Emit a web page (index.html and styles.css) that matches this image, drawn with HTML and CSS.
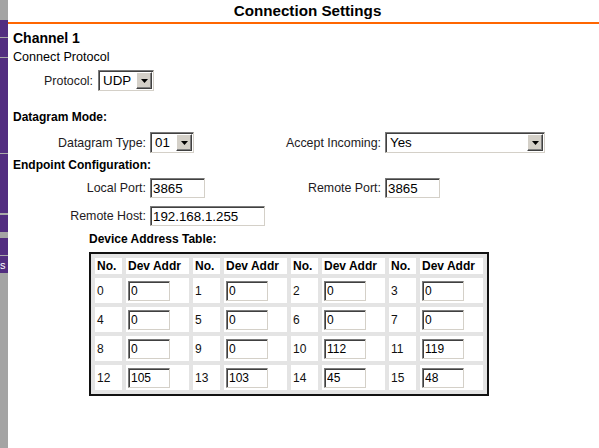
FILE: index.html
```html
<!DOCTYPE html>
<html lang="en">
<head>
<meta charset="utf-8">
<title>Connection Settings</title>
<link rel="stylesheet" href="styles.css">
</head>
<body>
<div class="page">
  <nav class="sidebar">
    <div class="nav-gap g20"></div>
    <div class="nav-item h18 sep"></div>
    <div class="nav-item h20 sep"></div>
    <div class="nav-item h96 sep"></div>
    <div class="nav-item h61 sep2"></div>
    <div class="nav-item h17"></div>
    <div class="nav-gap g6"></div>
    <div class="nav-item h18 sep"></div>
    <div class="nav-item h17 nav-link"><span>s</span></div>
  </nav>
  <main class="main">
    <h1 class="title">Connection Settings</h1>
    <div class="content">
      <h2 class="channel">Channel 1</h2>
      <div class="subhead">Connect Protocol</div>
      <div class="proto-row">
        <label class="lbl proto-lbl">Protocol:</label>
        <div class="sel w56">
          <select><option>UDP</option></select>
          <span class="arrow"><svg width="7" height="4" viewBox="0 0 7 4"><path d="M0 0H7L3.5 4Z" fill="#000"/></svg></span>
        </div>
      </div>

      <h3 class="section dgram-head">Datagram Mode:</h3>
      <div class="form-grid dgram-grid">
        <label class="lbl">Datagram Type:</label>
        <div class="sel w44">
          <select><option>01</option></select>
          <span class="arrow"><svg width="7" height="4" viewBox="0 0 7 4"><path d="M0 0H7L3.5 4Z" fill="#000"/></svg></span>
        </div>
        <label class="lbl">Accept Incoming:</label>
        <div class="sel w160">
          <select><option>Yes</option></select>
          <span class="arrow"><svg width="7" height="4" viewBox="0 0 7 4"><path d="M0 0H7L3.5 4Z" fill="#000"/></svg></span>
        </div>
      </div>

      <h3 class="section ep-head">Endpoint Configuration:</h3>
      <div class="form-grid ep-grid">
        <label class="lbl">Local Port:</label>
        <input class="txt w55" type="text" value="3865">
        <label class="lbl">Remote Port:</label>
        <input class="txt w55" type="text" value="3865">
        <label class="lbl">Remote Host:</label>
        <input class="txt w115 span2" type="text" value="192.168.1.255">
      </div>

      <h3 class="section table-head">Device Address Table:</h3>
      <table class="addr-table">
        <thead>
          <tr>
            <th class="c-no">No.</th><th class="c-addr">Dev Addr</th>
            <th class="c-no">No.</th><th class="c-addr">Dev Addr</th>
            <th class="c-no">No.</th><th class="c-addr">Dev Addr</th>
            <th class="c-no">No.</th><th class="c-addr">Dev Addr</th>
          </tr>
        </thead>
        <tbody>
          <tr>
            <td>0</td><td><input class="cell-in" type="text" value="0"></td>
            <td>1</td><td><input class="cell-in" type="text" value="0"></td>
            <td>2</td><td><input class="cell-in" type="text" value="0"></td>
            <td>3</td><td><input class="cell-in" type="text" value="0"></td>
          </tr>
          <tr>
            <td>4</td><td><input class="cell-in" type="text" value="0"></td>
            <td>5</td><td><input class="cell-in" type="text" value="0"></td>
            <td>6</td><td><input class="cell-in" type="text" value="0"></td>
            <td>7</td><td><input class="cell-in" type="text" value="0"></td>
          </tr>
          <tr>
            <td>8</td><td><input class="cell-in" type="text" value="0"></td>
            <td>9</td><td><input class="cell-in" type="text" value="0"></td>
            <td>10</td><td><input class="cell-in" type="text" value="112"></td>
            <td>11</td><td><input class="cell-in" type="text" value="119"></td>
          </tr>
          <tr>
            <td>12</td><td><input class="cell-in" type="text" value="105"></td>
            <td>13</td><td><input class="cell-in" type="text" value="103"></td>
            <td>14</td><td><input class="cell-in" type="text" value="45"></td>
            <td>15</td><td><input class="cell-in" type="text" value="48"></td>
          </tr>
        </tbody>
      </table>
    </div>
  </main>
</div>
</body>
</html>
```

FILE: styles.css
```css
* { box-sizing: border-box; }
html, body { margin: 0; padding: 0; background: #fff; }
body {
  font-family: "Liberation Sans", Arial, sans-serif;
  color: #000;
}
.page { display: flex; min-height: 100vh; }

/* sidebar */
.sidebar {
  width: 8px;
  flex: none;
  display: flex;
  flex-direction: column;
  background: #a4a4a4;
}
.nav-item { background: #522d80; }
.sep { border-bottom: 1px solid #a9a9a9; }
.sep2 { border-bottom: 2px solid #a9a9a9; }
.g20 { height: 20px; }
.g6 { height: 6px; }
.h17 { height: 17px; }
.h18 { height: 18px; }
.h20 { height: 20px; }
.h61 { height: 61px; }
.h96 { height: 96px; }
.nav-link {
  display: flex;
  align-items: center;
  padding-left: 0;
  color: #fff;
  font-size: 11px;
  line-height: 12px;
}

/* main */
.main { flex: 1; min-width: 0; }
.title {
  margin: 0;
  height: 24px;
  line-height: 22px;
  padding-left: 8px;
  text-align: center;
  font-size: 15.2px;
  font-weight: bold;
  border-bottom: 2px solid #ff6600;
}
.content { padding-left: 5px; }
.channel {
  margin: 6px 0 0;
  font-size: 14px;
  line-height: 16px;
  font-weight: bold;
}
.subhead {
  margin-top: 4px;
  font-size: 12.6px;
  line-height: 15px;
}
.lbl {
  font-size: 12.4px;
  color: #221a22;
  text-align: right;
  white-space: nowrap;
}
.proto-row {
  margin-top: 5px;
  display: flex;
  align-items: center;
  gap: 5px;
}
.proto-lbl { width: 80px; }

.section {
  margin: 0;
  font-size: 12px;
  line-height: 14px;
  font-weight: bold;
}
.dgram-head { margin-top: 19px; }
.ep-head { margin-top: 5px; }
.table-head { margin-top: 6px; padding-left: 76px; }

.form-grid {
  display: grid;
  grid-template-columns: 133px 60px 167px auto;
  column-gap: 4px;
  row-gap: 8px;
  align-items: center;
}
.form-grid .lbl { justify-self: end; }
.dgram-grid { margin-top: 8px; }
.ep-grid { margin-top: 6px; }
.span2 { grid-column: 2 / 4; }

/* select-like control */
.sel {
  display: inline-flex;
  height: 21px;
  background: #fff;
  border: 1px solid;
  border-color: #7b7b7b #d4d0c8 #d4d0c8 #7b7b7b;
  box-shadow: inset 1px 1px #404040;
  padding: 1px;
  justify-self: start;
}
.sel select {
  appearance: none;
  -webkit-appearance: none;
  border: 0;
  background: transparent;
  flex: 1;
  min-width: 0;
  padding: 0 0 0 3px;
  margin: 0;
  font-family: "Liberation Sans", Arial, sans-serif;
  font-size: 13.33px;
  color: #000;
  outline: none;
}
.arrow {
  flex: none;
  width: 16px;
  display: flex;
  align-items: center;
  justify-content: center;
  background: #d4d0c8;
  border: 1px solid;
  border-color: #ffffff #404040 #404040 #ffffff;
  box-shadow: inset -1px -1px #808080;
}
.w44 { width: 44px; }
.w56 { width: 56px; }
.w160 { width: 160px; }

/* text inputs */
.txt, .cell-in {
  height: 20px;
  margin: 0;
  border: 1px solid;
  border-color: #7b7b7b #d4d0c8 #d4d0c8 #7b7b7b;
  box-shadow: inset 1px 1px #404040;
  background: #fff;
  font-family: "Liberation Sans", Arial, sans-serif;
  color: #000;
  outline: none;
}
.txt { font-size: 13.33px; padding: 0 2px; justify-self: start; }
.w55 { width: 55px; }
.w115 { width: 115px; }

/* table */
.addr-table {
  margin: 6px 0 0 76px;
  border: 2px solid #111;
  border-collapse: separate;
  border-spacing: 4px;
  background: #e4e4e4;
  font-size: 12px;
}
.addr-table th, .addr-table td {
  background: #fff;
  padding: 0 0 0 2px;
  text-align: left;
  vertical-align: middle;
  color: #111;
}
.addr-table th {
  height: 16px;
  font-weight: bold;
  color: #000;
}
.addr-table td { height: 25px; }
.c-no { width: 27px; }
.c-addr { width: 63px; }
.cell-in {
  width: 42px;
  font-size: 12px;
  padding: 0 1px 0 2px;
}
```
